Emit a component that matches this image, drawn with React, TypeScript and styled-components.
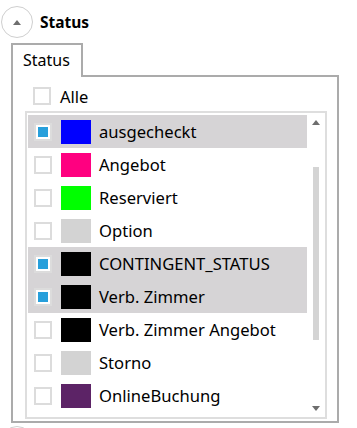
import React from "react";
import styled, { createGlobalStyle } from "styled-components";

const Global = createGlobalStyle`
  html, body { margin: 0; padding: 0; background: #ffffff; }
  body { font-family: "Noto Sans", "Open Sans", sans-serif; color: #000; overflow: hidden; }
`;

const Page = styled.div`
  width: 357px;
  height: 428px;
  overflow: hidden;
  padding: 6px 0 0 1px;
  box-sizing: border-box;
`;

const Header = styled.div<{ $gapTop?: number }>`
  display: flex;
  align-items: center;
  gap: 7px;
  height: 32px;
  margin-top: ${(p) => p.$gapTop ?? 0}px;
`;

const CircleButton = styled.div`
  width: 32px;
  height: 32px;
  box-sizing: border-box;
  border: 1px solid #cfcfcf;
  border-radius: 50%;
  display: flex;
  align-items: center;
  justify-content: center;
  background: #fff;
`;

const Triangle = styled.div<{ $down?: boolean }>`
  width: 0;
  height: 0;
  border-left: 4px solid transparent;
  border-right: 4px solid transparent;
  ${(p) => (p.$down ? "border-top: 5px solid #6e6e6e;" : "border-bottom: 5px solid #6e6e6e;")}
`;

const Title = styled.div`
  font-weight: 700;
  font-size: 15.5px;
  line-height: 20px;
`;

const Group = styled.div`
  margin: 5px 0 0 10px;
  width: 328px;
  display: flex;
  flex-direction: column;
`;

const TabRow = styled.div`
  display: flex;
  height: 34px;
`;

const Tab = styled.div`
  width: 72px;
  box-sizing: border-box;
  border: 2px solid #ababab;
  border-bottom: none;
  padding: 3px 0 0 10px;
  font-size: 16px;
  line-height: 24px;
`;

const TabFiller = styled.div`
  flex: 1;
  border-bottom: 2px solid #ababab;
`;

const Panel = styled.div`
  border: 2px solid #ababab;
  border-top: none;
  padding: 10px 10px 2px 12px;
  display: flex;
  flex-direction: column;
  gap: 6px;
`;

const AllRow = styled.div`
  display: flex;
  align-items: center;
  gap: 9px;
  padding-left: 8px;
  height: 18px;
  font-size: 16.5px;
`;

const CheckBox = styled.div<{ $checked?: boolean }>`
  width: 18px;
  height: 18px;
  box-sizing: border-box;
  border: 2px solid #dcdcdc;
  background: #fff;
  flex-shrink: 0;
  display: flex;
  align-items: center;
  justify-content: center;
  &::after {
    content: "";
    width: 10px;
    height: 10px;
    background: ${(p) => (p.$checked ? "#279fdb" : "transparent")};
  }
`;

const ListBox = styled.div`
  border: 2px solid #dedede;
  height: 308px;
  box-sizing: border-box;
  display: flex;
  overflow: hidden;
`;

const Rows = styled.div`
  flex: 1;
  padding: 2px 0 0 1px;
  display: flex;
  flex-direction: column;
  overflow: hidden;
`;

const Row = styled.div<{ $selected?: boolean }>`
  height: 33px;
  flex-shrink: 0;
  display: flex;
  align-items: center;
  padding-left: 6px;
  background: ${(p) => (p.$selected ? "#d6d4d6" : "transparent")};
  font-size: 16.6px;
`;

const Swatch = styled.div<{ $color: string }>`
  width: 30px;
  height: 24px;
  margin: 0 8px 0 9px;
  background: ${(p) => p.$color};
  flex-shrink: 0;
`;

const Label = styled.span`
  white-space: nowrap;
`;

const ScrollBar = styled.div`
  width: 18px;
  display: flex;
  flex-direction: column;
  align-items: center;
  padding: 7px 0 6px;
  box-sizing: border-box;
`;

const Track = styled.div`
  flex: 1;
  display: flex;
  flex-direction: column;
  align-items: center;
  padding: 42px 0 0;
`;

const Thumb = styled.div`
  width: 6px;
  height: 173px;
  background: #d4d4d4;
`;

const items = [
  { label: "ausgecheckt", color: "#0000ff", checked: true },
  { label: "Angebot", color: "#ff0080", checked: false },
  { label: "Reserviert", color: "#00ff00", checked: false },
  { label: "Option", color: "#d3d3d3", checked: false },
  { label: "CONTINGENT_STATUS", color: "#000000", checked: true },
  { label: "Verb. Zimmer", color: "#000000", checked: true },
  { label: "Verb. Zimmer Angebot", color: "#000000", checked: false },
  { label: "Storno", color: "#d3d3d3", checked: false },
  { label: "OnlineBuchung", color: "#5c2366", checked: false },
  { label: "", color: "#e9aab6", checked: false },
];

export default function App() {
  return (
    <>
      <Global />
      <Page>
        <Header>
          <CircleButton>
            <Triangle />
          </CircleButton>
          <Title>Status</Title>
        </Header>
        <Group>
          <TabRow>
            <Tab>Status</Tab>
            <TabFiller />
          </TabRow>
          <Panel>
            <AllRow>
              <CheckBox />
              <Label>Alle</Label>
            </AllRow>
            <ListBox>
              <Rows>
                {items.map((it, i) => (
                  <Row key={i} $selected={it.checked}>
                    <CheckBox $checked={it.checked} />
                    <Swatch $color={it.color} />
                    {it.label && <Label>{it.label}</Label>}
                  </Row>
                ))}
              </Rows>
              <ScrollBar>
                <Triangle />
                <Track>
                  <Thumb />
                </Track>
                <Triangle $down />
              </ScrollBar>
            </ListBox>
          </Panel>
        </Group>
        <Header $gapTop={3}>
          <CircleButton>
            <Triangle $down />
          </CircleButton>
        </Header>
      </Page>
    </>
  );
}
